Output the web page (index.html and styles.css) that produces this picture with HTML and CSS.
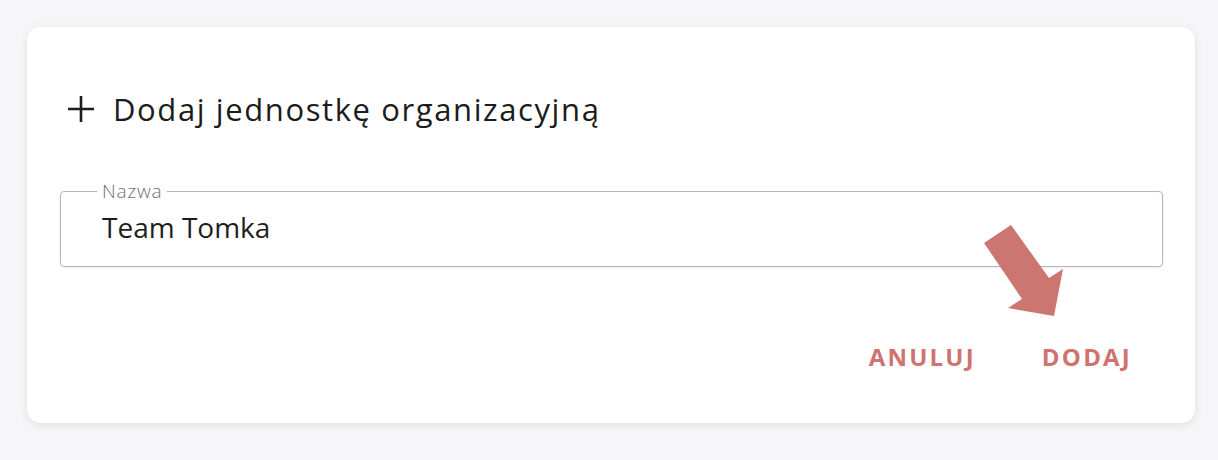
FILE: index.html
```html
<!DOCTYPE html>
<html lang="pl">
<head>
<meta charset="utf-8">
<title>Dodaj jednostkę organizacyjną</title>
<link rel="stylesheet" href="styles.css">
</head>
<body>
<div class="card">
  <div class="header">
    <svg class="plus" width="28" height="28" viewBox="0 0 28 28" aria-hidden="true">
      <path d="M14 1 V27 M1 14 H27" stroke="#1c1c1c" stroke-width="2.6" fill="none"/>
    </svg>
    <h2 class="title">Dodaj jednostkę organizacyjną</h2>
  </div>
  <fieldset class="field">
    <legend class="field-label">Nazwa</legend>
    <div class="field-value">Team Tomka</div>
  </fieldset>
  <div class="actions">
    <button class="btn">ANULUJ</button>
    <button class="btn">DODAJ</button>
  </div>
  <svg class="arrow" width="90" height="100" viewBox="0 0 90 100" aria-hidden="true">
    <polygon points="1,19 28,1 66,54 80,45 71,92 25,84 39,75" fill="#cd7570"/>
  </svg>
</div>
</body>
</html>
```
FILE: styles.css
```css
html, body {
  margin: 0;
  padding: 0;
  background: #f6f6f8;
}
body {
  padding: 27px 23px 37px 27px;
  font-family: "Open Sans", "Noto Sans", sans-serif;
}
.card {
  position: relative;
  background: #ffffff;
  border-radius: 14px;
  box-shadow: 0 2px 10px rgba(0, 0, 0, 0.09);
  height: 396px;
  box-sizing: border-box;
  padding: 60px 32px 0 33px;
  display: flex;
  flex-direction: column;
}
.header {
  height: 44px;
  display: flex;
  align-items: center;
  gap: 18px;
  padding-left: 7px;
}
.plus {
  flex: none;
}
.title {
  margin: 0;
  font-size: 31px;
  font-weight: 400;
  color: #1c1c1c;
  letter-spacing: 1.6px;
}
.field {
  margin: 52px 0 0 0;
  height: 84px;
  box-sizing: border-box;
  border: 1px solid #b4b4bc;
  border-radius: 4px;
  padding: 0 40px 0 36px;
  box-shadow: 0 1px 3px rgba(0, 0, 0, 0.08);
  min-width: 0;
}
.field-label {
  padding: 0 5px;
  font-size: 19px;
  font-weight: 300;
  letter-spacing: 0.8px;
  color: #707070;
  line-height: 16px;
}
.field-value {
  font-size: 28px;
  color: #1e1e1e;
  padding-left: 5px;
  line-height: 36px;
  margin-top: 10px;
}
.actions {
  margin-top: 65px;
  display: flex;
  justify-content: flex-end;
}
.btn {
  height: 48px;
  padding: 0 31px 0 35px;
  border: none;
  background: transparent;
  font-family: "Open Sans", "Noto Sans", sans-serif;
  font-weight: 700;
  font-size: 24px;
  letter-spacing: 2.2px;
  color: #cf7370;
}
.arrow {
  position: absolute;
  left: 956px;
  top: 197px;
}
```
